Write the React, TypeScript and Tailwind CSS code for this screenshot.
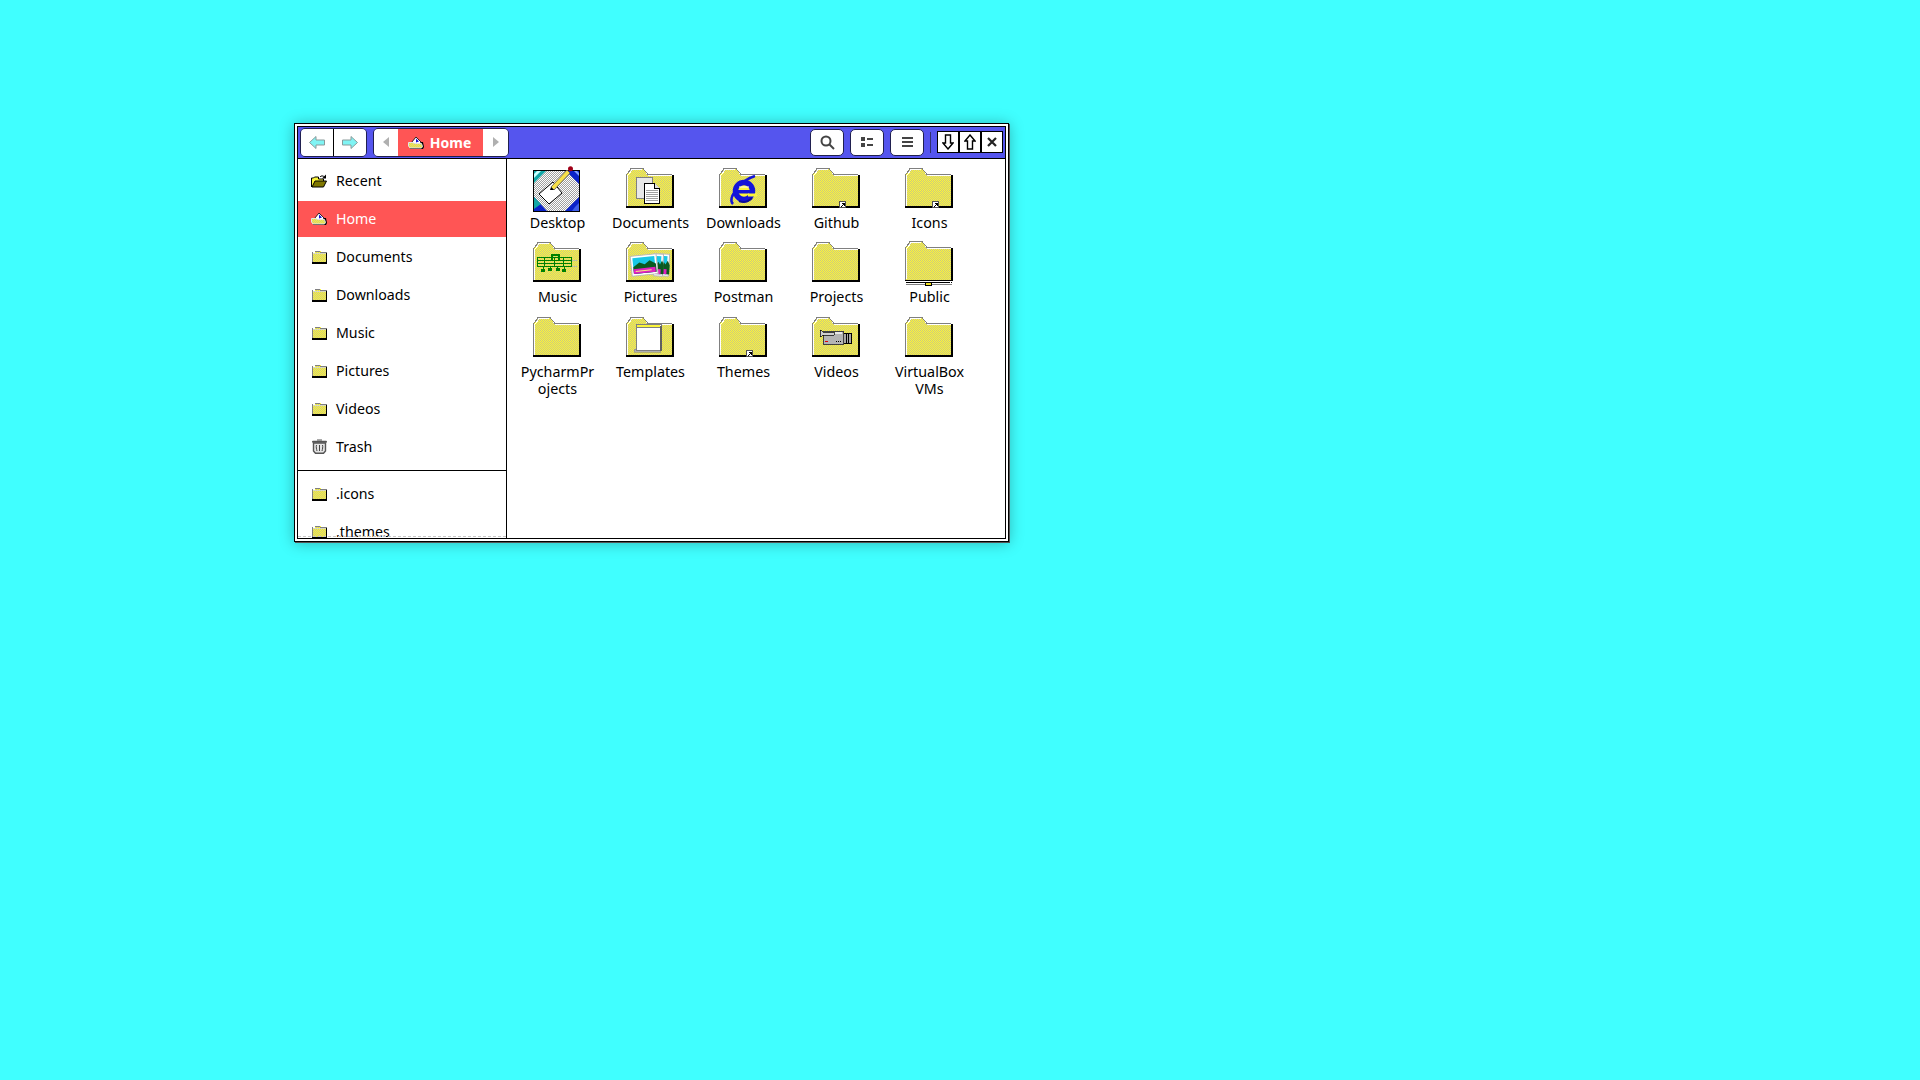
import React from 'react';

const font = { fontFamily: '"Noto Sans", sans-serif' };

function Dither({ id }: { id: string }) {
  return (
    <pattern id={id} width="2" height="2" patternUnits="userSpaceOnUse">
      <rect width="2" height="2" fill="#fdf738" />
      <rect width="1" height="1" fill="#ccc880" />
      <rect x="1" y="1" width="1" height="1" fill="#ccc880" />
    </pattern>
  );
}

function LinkBadge() {
  return (
    <g shapeRendering="crispEdges">
      <rect x="27.500" y="33.500" width="6" height="6" fill="#fff" stroke="#505050" />
      <path d="M29 38h1v-1h1v-1h-1v-1h3v3h-1v-1h-1v1h-1v1h-1z" fill="#000" />
    </g>
  );
}

function FolderBase({ children }: { children?: React.ReactNode }) {
  return (
    <svg width="48" height="40" viewBox="0 0 48 40" className="block">
      <defs>
        <Dither id="dither" />
      </defs>
      <g shapeRendering="crispEdges">
        <path d="M0.500 7.500L5 1h12l5 6.500h25.500V39.500H0.500z" fill="url(#dither)" />
        <path d="M0.500 39V7L5 0.500h12L22 6.500h24" fill="none" stroke="#808080" />
        <path d="M1.500 38V8L6 1.500h10" fill="none" stroke="#fff" />
        <rect x="46" y="7" width="2" height="33" fill="#000" />
        <rect x="0" y="38" width="48" height="2" fill="#000" />
      </g>
      {children}
    </svg>
  );
}

function DesktopIcon() {
  return (
    <svg width="48" height="46" viewBox="0 0 48 46" className="block -mt-[2px]">
      <defs>
        <pattern id="grey" width="2" height="2" patternUnits="userSpaceOnUse">
          <rect width="2" height="2" fill="#fff" />
          <rect width="1" height="1" fill="#a0a0a0" />
          <rect x="1" y="1" width="1" height="1" fill="#a0a0a0" />
        </pattern>
      </defs>
      <rect x="0.500" y="4.500" width="46" height="41" fill="url(#grey)" stroke="#000" />
      <path d="M1 5h12L1 17z" fill="#12a6a6" />
      <path d="M4 5h4L1 12V8z" fill="#c8ffff" />
      <path d="M46 5H33l13 13z" fill="#0a22c8" />
      <path d="M41 5h3l2 2v3z" fill="#7f9fff" />
      <path d="M1 45V31l13 14z" fill="#0a22c8" />
      <path d="M1 31l7 7-7 5z" fill="#12a6a6" />
      <path d="M46 45H32l14-14z" fill="#0a22c8" />
      <path d="M42 41l4-4v8h-7z" fill="#3f5fe8" />
      <path d="M6 28l14-12 9 11-13 11z" fill="#fff" stroke="#000" />
      <path d="M18 21l3 3L37 7l-3-3z" fill="#f7e04a" stroke="#555" strokeWidth="0.800" />
      <path d="M18 21l-1 3 4 0z" fill="#000" />
      <circle cx="37.500" cy="2.800" r="2.500" fill="#a00018" />
    </svg>
  );
}

function DocumentsOverlay() {
  return (
    <g shapeRendering="crispEdges">
      <rect x="10.500" y="9.500" width="16" height="21" fill="#e8e8e8" stroke="#808080" />
      <path d="M18.500 15.500h10l5 5v15h-15z" fill="#fff" stroke="#000" />
      <path d="M28.500 15.500v5h5" fill="#ddd" stroke="#000" />
      {[22, 24, 26, 28, 30, 32].map(y => (
        <rect key={y} x="20" y={y} width="12" height="1" fill="#a0a0a0" />
      ))}
    </g>
  );
}

function IeOverlay() {
  return (
    <g>
      <path d="M14 36C8 30 22 12 36 8" fill="none" stroke="#1414d8" strokeWidth="2.500" />
      <circle cx="25" cy="23" r="8.500" fill="#fbf53a" stroke="#1414d8" strokeWidth="5.500" />
      <rect x="17" y="22" width="18" height="3.500" fill="#1414d8" />
      <rect x="29" y="25.500" width="9" height="3" fill="#fbf53a" />
      <path d="M20 18h10v2H20z" fill="#fff" opacity="0.500" />
      <path d="M20 33c5 2 10 0 13-3" fill="none" stroke="#0a0a9a" strokeWidth="2" />
    </g>
  );
}

function MusicOverlay() {
  return (
    <g fill="none" stroke="#008000" shapeRendering="crispEdges">
      {[15, 18, 21, 24].map(y => (
        <path key={y} d={`M4 ${y + 0.500}h35`} />
      ))}
      <path d="M4.500 15v10M11.500 15v10M21.500 15v10M30.500 15v10M38.500 15v10" />
      <path d="M18 12.500h8M18.500 12v7M25.500 12v7" strokeWidth="2" />
      <path d="M10 25v2M17 25v2M24 25v2M31 25v2" />
      <path d="M8 27h3v2H8zM15 26h3v2h-3zM23 26h3v2h-3zM29 27h3v2h-3z" fill="#008000" />
      <path d="M39 18h5M39 24h5" stroke="#c0c0a0" />
    </g>
  );
}

function Photo({ x, y, w, h }: { x: number; y: number; w: number; h: number }) {
  return (
    <g>
      <rect x={x} y={y} width={w} height={h} fill="#fff" stroke="#b8b8b8" />
      <rect x={x + 2} y={y + 2} width={w - 4} height={h - 4} fill="#18c8e8" />
      <path
        d={`M${x + 2} ${y + h * 0.55}l${w * 0.25} -${h * 0.2} ${w * 0.2} ${h * 0.12} ${w * 0.2} -${h * 0.18} ${w * 0.23} ${h * 0.2}V${y + h - 2}H${x + 2}z`}
        fill="#0a5a20"
      />
      <rect x={x + 2} y={y + h - 7} width={w - 4} height="5" fill="#e020c0" />
      <rect x={x + 4} y={y + h - 5} width={w - 10} height="1" fill="#f8f080" />
    </g>
  );
}

function PicturesOverlay() {
  return (
    <g>
      <g transform="rotate(4 38 22)">
        <Photo x={33} y={12} w={10} h={22} />
      </g>
      <g transform="rotate(3 32 22)">
        <Photo x={28} y={12} w={9} h={22} />
      </g>
      <g transform="rotate(-6 18 22)">
        <Photo x={5} y={13} w={26} h={20} />
      </g>
    </g>
  );
}

function TemplatesOverlay() {
  return (
    <g shapeRendering="crispEdges">
      <rect x="8" y="32" width="26" height="3" fill="#b0b0b0" stroke="#808080" strokeWidth="0.500" />
      <rect x="10" y="7" width="25" height="26" fill="#fff" stroke="#808080" />
      <rect x="11" y="8" width="23" height="3" fill="#fbf53a" />
      <rect x="11" y="10" width="23" height="1" fill="#808080" />
      <rect x="34" y="9" width="2" height="25" fill="#606060" />
    </g>
  );
}

function VideoOverlay() {
  return (
    <g shapeRendering="crispEdges">
      <rect x="31.500" y="16.500" width="8" height="10" fill="#a8a8a8" stroke="#000" />
      <path d="M34.500 17v9M36.500 17v9" stroke="#000" />
      <rect x="11" y="14" width="20" height="13" fill="#b4b4b4" stroke="#404040" />
      <rect x="12" y="15" width="18" height="2" fill="#e8e8e8" />
      <path d="M8 13l3 2h11v3H11l-3 2z" fill="#d0d0d0" stroke="#000" strokeWidth="0.700" />
      <rect x="13" y="24" width="3" height="1" fill="#e00000" />
      <rect x="24" y="24" width="1" height="1" fill="#000" />
      <rect x="26" y="24" width="1" height="1" fill="#000" />
      <rect x="28" y="24" width="1" height="1" fill="#000" />
    </g>
  );
}

function PublicIcon() {
  return (
    <svg width="48" height="45" viewBox="0 0 48 45" className="block -mt-px">
      <defs>
        <Dither id="dither2" />
      </defs>
      <g shapeRendering="crispEdges">
        <path d="M0.500 7.500L5 1h12l5 6.500h25.500V39.500H0.500z" fill="url(#dither2)" />
        <path d="M0.500 39V7L5 0.500h12L22 6.500h24" fill="none" stroke="#808080" />
        <path d="M1.500 38V8L6 1.500h10" fill="none" stroke="#fff" />
        <rect x="46" y="7" width="2" height="33" fill="#000" />
        <rect x="0" y="39" width="48" height="1" fill="#000" />
        <path d="M1 41.500h46" stroke="#000" strokeDasharray="44 1" />
        <path d="M1 43.500h46" stroke="#808080" />
        <rect x="20.500" y="41.500" width="6" height="3" fill="#f0e020" stroke="#000" />
      </g>
    </svg>
  );
}

function SmallFolder() {
  return (
    <svg width="15" height="14" viewBox="0 0 15 14" className="block">
      <defs>
        <Dither id="dither3" />
      </defs>
      <g shapeRendering="crispEdges">
        <path d="M0 2h2l1-1h5l1 1h5v11H0z" fill="url(#dither3)" />
        <path d="M0.500 13V2.500h2l1-1.500h4l1 1.500h6" fill="none" stroke="#808080" />
        <rect x="1" y="2" width="2" height="1" fill="#fff" />
        <rect x="1" y="3" width="13" height="1" fill="#d8d8c0" />
        <rect x="14" y="3" width="1" height="11" fill="#000" />
        <rect x="0" y="12" width="15" height="2" fill="#000" />
      </g>
    </svg>
  );
}

function RecentIcon() {
  return (
    <svg width="16" height="14" viewBox="0 0 16 14" className="block">
      <path d="M0.500 13V4h2l1-1h4v2h5v2" fill="#fbf53a" stroke="#000" />
      <path d="M1 13l3-6h11.500l-3 6z" fill="#807800" stroke="#000" />
      <path d="M9 3c1-1.500 3-1.500 4.500 0" fill="none" stroke="#000" />
      <path d="M15 0.500v4h-4z" fill="#000" />
    </svg>
  );
}

function HomeIcon() {
  return (
    <svg width="16" height="13" viewBox="0 0 16 13" className="block">
      <defs>
        <Dither id="dither4" />
      </defs>
      <path d="M2 6h13l1 5-1 2H2z" fill="#000" />
      <path d="M3.500 6.500L8 1l5 5-1 2H4z" fill="#fff" stroke="#000" strokeWidth="0.800" />
      <path d="M8 2.500l3 3-3 1z" fill="#1414d8" />
      <path d="M0.500 6.500h4l2 1h7l1 3-1 1.500H2l-1.500-2z" fill="url(#dither4)" stroke="#e4e4e4" />
    </svg>
  );
}

function TrashIcon() {
  return (
    <svg width="15" height="15" viewBox="0 0 15 15" className="block">
      <path d="M1 2.700h13" stroke="#555" strokeWidth="2" strokeLinecap="round" fill="none" />
      <path d="M5 1h5" stroke="#555" fill="none" />
      <path d="M1.500 4v8l2 2.300h8l2-2.300V4z" fill="#e4e4e4" stroke="#555" strokeWidth="1.400" />
      <path d="M4.500 6c-.6 2 0 4 .5 6M7.500 6v6M10.500 6c.6 2 0 4-.5 6" stroke="#444" fill="none" />
    </svg>
  );
}

function ArrowIcon({ dir }: { dir: 'left' | 'right' }) {
  return (
    <svg width="16" height="13" viewBox="0 0 16 13" className="block">
      <path
        d={dir === 'left' ? 'M0.500 6.500L7 0.500v3.500h8.500v5H7v3.500z' : 'M15.500 6.500L9 0.500v3.500H0.500v5H9v3.500z'}
        fill="#7ff4f4"
        stroke="#8a9a9a"
      />
    </svg>
  );
}

function BorderedArrow({ up }: { up: boolean }) {
  return (
    <svg width="12" height="16" viewBox="0 0 12 16" className="block">
      <path
        d={up ? 'M6 1L11 7H8.500v8h-5V7H1z' : 'M6 15L11 9H8.500V1h-5v8H1z'}
        fill="#fff"
        stroke="#000"
        strokeWidth="1.400"
      />
    </svg>
  );
}

function SegButton({ children, className }: { children: React.ReactNode; className?: string }) {
  return <div className={`h-[27px] flex items-center justify-center bg-white ${className}`}>{children}</div>;
}

function PlainButton({ children }: { children: React.ReactNode }) {
  return (
    <div className="w-[34px] h-[27px] flex items-center justify-center bg-white rounded-[5px] border border-[#202050]">
      {children}
    </div>
  );
}

const sidebarItems = [
  { name: 'Recent', icon: <RecentIcon /> },
  { name: 'Home', icon: <HomeIcon />, active: true },
  { name: 'Documents', icon: <SmallFolder /> },
  { name: 'Downloads', icon: <SmallFolder /> },
  { name: 'Music', icon: <SmallFolder /> },
  { name: 'Pictures', icon: <SmallFolder /> },
  { name: 'Videos', icon: <SmallFolder /> },
  { name: 'Trash', icon: <TrashIcon /> },
];

const files: { name: string; icon: React.ReactNode }[] = [
  { name: 'Desktop', icon: <DesktopIcon /> },
  { name: 'Documents', icon: <FolderBase><DocumentsOverlay /></FolderBase> },
  { name: 'Downloads', icon: <FolderBase><IeOverlay /></FolderBase> },
  { name: 'Github', icon: <FolderBase><LinkBadge /></FolderBase> },
  { name: 'Icons', icon: <FolderBase><LinkBadge /></FolderBase> },
  { name: 'Music', icon: <FolderBase><MusicOverlay /></FolderBase> },
  { name: 'Pictures', icon: <FolderBase><PicturesOverlay /></FolderBase> },
  { name: 'Postman', icon: <FolderBase /> },
  { name: 'Projects', icon: <FolderBase /> },
  { name: 'Public', icon: <PublicIcon /> },
  { name: 'PycharmPr\nojects', icon: <FolderBase /> },
  { name: 'Templates', icon: <FolderBase><TemplatesOverlay /></FolderBase> },
  { name: 'Themes', icon: <FolderBase><LinkBadge /></FolderBase> },
  { name: 'Videos', icon: <FolderBase><VideoOverlay /></FolderBase> },
  { name: 'VirtualBox\nVMs', icon: <FolderBase /> },
];

function SidebarRow({ name, icon, active }: { name: string; icon: React.ReactNode; active?: boolean }) {
  return (
    <div className={`h-9 mb-0.5 pl-[13px] pb-px flex items-center gap-[9px] text-[14.2px] ${active ? 'bg-[#ff5555] text-white' : 'text-black'}`}>
      <div className="w-[16px] flex justify-center">{icon}</div>
      <span>{name}</span>
    </div>
  );
}

export default function App() {
  return (
    <div className="w-[1920px] h-[1080px] bg-[#40ffff] pl-[294px] pt-[123px] overflow-hidden" style={font}>
      <div className="w-[715px] h-[419px] bg-white border border-black p-[2px] shadow-[1px_1px_0_#555,0_1px_14px_rgba(0,0,0,0.3)]">
        <div className="h-full border border-black flex flex-col">
          {/* Header bar */}
          <div className="h-8 shrink-0 bg-[#5555ee] border-b border-black flex items-center pl-0.5 pb-px">
            <div className="flex rounded-[5px] border border-[#202050] overflow-hidden">
              <SegButton className="w-[33px] border-r border-black"><ArrowIcon dir="left" /></SegButton>
              <SegButton className="w-[32px]"><ArrowIcon dir="right" /></SegButton>
            </div>
            <div className="ml-[6px] flex rounded-[5px] border border-[#202050] overflow-hidden">
              <SegButton className="w-[24px]">
                <svg width="6" height="10" viewBox="0 0 6 10"><path d="M6 0v10L0 5z" fill="#b0b0b0" /></svg>
              </SegButton>
              <div className="w-[85px] h-[27px] pr-0.5 flex items-center justify-center gap-[6px] bg-[#ff5555] text-white font-bold text-[14px]">
                <HomeIcon />
                <span>Home</span>
              </div>
              <SegButton className="w-[25px]">
                <svg width="6" height="10" viewBox="0 0 6 10"><path d="M0 0v10l6-5z" fill="#b0b0b0" /></svg>
              </SegButton>
            </div>
            <div className="ml-[301px] flex gap-[6px]">
              <PlainButton>
                <svg width="15" height="15" viewBox="0 0 15 15" fill="none" stroke="#444" strokeWidth="2">
                  <circle cx="6" cy="6" r="4.500" />
                  <path d="M9.500 9.500L14 14" />
                </svg>
              </PlainButton>
              <PlainButton>
                <svg width="12" height="10" viewBox="0 0 12 10" fill="#444">
                  <rect x="0" y="0" width="4" height="4" />
                  <rect x="0" y="6" width="4" height="4" />
                  <rect x="6" y="1" width="6" height="2" />
                  <rect x="6" y="7" width="6" height="2" />
                </svg>
              </PlainButton>
              <PlainButton>
                <svg width="11" height="10" viewBox="0 0 11 10" fill="#444">
                  <rect width="11" height="2" />
                  <rect y="4" width="11" height="2" />
                  <rect y="8" width="11" height="2" />
                </svg>
              </PlainButton>
            </div>
            <div className="ml-[6px] w-px h-[21px] bg-[#303070]" />
            <div className="ml-[6px] flex border border-black bg-black gap-[2px] h-[22px]">
              <div className="w-[20px] bg-white flex items-center justify-center"><BorderedArrow up={false} /></div>
              <div className="w-[20px] bg-white flex items-center justify-center"><BorderedArrow up /></div>
              <div className="w-[20px] bg-white flex items-center justify-center">
                <svg width="10" height="10" viewBox="0 0 10 10"><path d="M1 1l8 8M9 1l-8 8" stroke="#222" strokeWidth="2.200" /></svg>
              </div>
            </div>
          </div>

          <div className="flex-1 flex min-h-0">
            {/* Sidebar */}
            <div className="relative w-[209px] shrink-0 border-r border-black overflow-hidden pt-1">
              {sidebarItems.map(item => (
                <SidebarRow key={item.name} name={item.name} icon={item.icon} active={item.active} />
              ))}
              <div className="mt-[5px] mb-[5px] border-t border-black" />
              <SidebarRow name=".icons" icon={<SmallFolder />} />
              <SidebarRow name=".themes" icon={<SmallFolder />} />
              <div className="absolute left-0 right-0 bottom-px border-t border-dashed border-[#c8c8c8]" />
            </div>

            {/* File grid */}
            <div className="flex-1 bg-white pl-[4px] pt-[9px]">
              <div className="grid grid-cols-[repeat(5,93px)] grid-rows-[74px_75px_auto]">
                {files.map(file => (
                  <div key={file.name} className="flex flex-col items-center">
                    <div className="h-10 w-[48px] mr-px">{file.icon}</div>
                    <div className="mt-[6px] text-[14.3px] leading-[17px] text-black text-center whitespace-pre-line">
                      {file.name}
                    </div>
                  </div>
                ))}
              </div>
            </div>
          </div>
        </div>
      </div>
    </div>
  );
}
